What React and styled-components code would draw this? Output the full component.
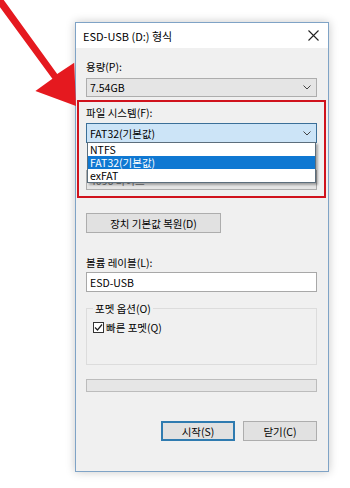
import styled, { createGlobalStyle } from "styled-components"

const GlobalStyle = createGlobalStyle`
  html, body {
    margin: 0;
    background: #ffffff;
  }
  body {
    font-family: "Noto Sans CJK KR", "Noto Sans", sans-serif;
    font-size: 10.5px;
    color: #000;
  }
`

function Chevron() {
  return (
    <svg width="8" height="5" viewBox="0 0 8 5">
      <path d="M0.5 0.5 L4 4 L7.5 0.5" fill="none" stroke="#444" strokeWidth="1" />
    </svg>
  )
}

function App() {
  return (
    <Page>
      <GlobalStyle />
      <Arrow width="90" height="110" viewBox="0 0 90 110">
        <polygon
          points="-0.3,-5.6 57.2,74 74.2,62.8 76,106 35.4,91 52.4,78.7 -6.4,-1.4"
          fill="#e5191f"
        />
      </Arrow>

      <Window>
        <TitleBar>
          <span>ESD-USB (D:) 형식</span>
          <svg width="11" height="11" viewBox="0 0 11 11">
            <path d="M0.5 0.5 L10.5 10.5 M10.5 0.5 L0.5 10.5" stroke="#222" strokeWidth="1.1" />
          </svg>
        </TitleBar>

        <Body>
          <Label $top={10.5}>용량(P):</Label>
          <Combo $top={4} $height={19}>
            <span>7.54GB</span>
            <Chevron />
          </Combo>

          <Highlight>
            <Label $top={0}>파일 시스템(F):</Label>
            <Combo $top={3} $height={20} $focused>
              <span>FAT32(기본값)</span>
              <Chevron />
              <List>
                <Option>NTFS</Option>
                <Option $selected>FAT32(기본값)</Option>
                <Option>exFAT</Option>
              </List>
            </Combo>
            {/* covered by the open list */}
            <Label $top={4} $hidden>할당 단위 크기(A):</Label>
            <Combo $top={8} $height={20}>
              <Muted>4096 바이트</Muted>
              <Chevron />
            </Combo>
          </Highlight>

          <Button $top={15} $width={135}>장치 기본값 복원(D)</Button>

          <Label $top={21.5}>볼륨 레이블(L):</Label>
          <TextBox>ESD-USB</TextBox>

          <Group>
            <GroupTitle>포멧 옵션(O)</GroupTitle>
            <CheckRow>
              <CheckBox>
                <svg width="9" height="9" viewBox="0 0 9 9">
                  <path d="M1 4.5 L3.5 7 L8 1.5" fill="none" stroke="#222" strokeWidth="1.2" />
                </svg>
              </CheckBox>
              <span>빠른 포멧(Q)</span>
            </CheckRow>
          </Group>

          <Progress />

          <ButtonRow>
            <Button $width={74} $default>시작(S)</Button>
            <Button $width={74}>닫기(C)</Button>
          </ButtonRow>
        </Body>
      </Window>
    </Page>
  )
}

const Page = styled.div`
  position: relative;
  width: 350px;
  height: 488px;
  box-sizing: border-box;
  padding: 22px 0 0 75px;
  overflow: hidden;
`

const Arrow = styled.svg`
  position: absolute;
  left: 0;
  top: 0;
  z-index: 2;
`

const Window = styled.div`
  width: 254px;
  box-sizing: border-box;
  border: 1px solid #7fa3c6;
  background: #f0f0f0;
  box-shadow: 0 0 9px rgba(0, 0, 0, 0.22);
  display: flex;
  flex-direction: column;
`

const TitleBar = styled.div`
  height: 25px;
  background: #ffffff;
  display: flex;
  align-items: center;
  justify-content: space-between;
  padding: 0 9px 0 7px;
  font-size: 11px;
`

const Body = styled.div`
  display: flex;
  flex-direction: column;
  padding: 0 11px 30px 10px;
`

const Label = styled.div`
  margin-top: ${(p) => p.$top}px;
  line-height: 15px;
  height: 15px;
  white-space: nowrap;
  visibility: ${(p) => (p.$hidden ? "hidden" : "visible")};
`

const Combo = styled.div`
  position: relative;
  margin-top: ${(p) => p.$top}px;
  height: ${(p) => p.$height}px;
  box-sizing: border-box;
  border: 1px solid ${(p) => (p.$focused ? "#3b6f98" : "#adadad")};
  background: ${(p) => (p.$focused ? "#cce4f7" : "#e5e5e5")};
  display: flex;
  align-items: center;
  justify-content: space-between;
  padding: 0 5px 0 3px;
`

const Muted = styled.span`
  color: #6d6d6d;
`

const List = styled.div`
  position: absolute;
  top: 100%;
  left: 0;
  right: 0;
  z-index: 1;
  background: #ffffff;
  border: 1px solid #5c6e7c;
  box-shadow: 2px 2px 2px rgba(0, 0, 0, 0.3);
  display: flex;
  flex-direction: column;
`

const Option = styled.div`
  height: 13px;
  line-height: 13px;
  padding: 0 2px;
  background: ${(p) => (p.$selected ? "#0f78d2" : "#ffffff")};
  color: ${(p) => (p.$selected ? "#ffffff" : "#000")};
`

const Highlight = styled.div`
  margin: 3.5px -9px 0 -9px;
  border: 2px solid #d0121c;
  padding: 3px 7px 6px 7px;
  display: flex;
  flex-direction: column;
`

const Button = styled.div`
  margin-top: ${(p) => p.$top || 0}px;
  align-self: flex-start;
  width: ${(p) => p.$width}px;
  height: 20px;
  box-sizing: border-box;
  border: ${(p) => (p.$default ? "2px solid #2f7bb0" : "1px solid #adadad")};
  background: #e1e1e1;
  display: flex;
  align-items: center;
  justify-content: center;
  white-space: nowrap;
`

const TextBox = styled.div`
  margin-top: 2.5px;
  height: 20px;
  box-sizing: border-box;
  border: 1px solid #a8a8a8;
  background: #ffffff;
  display: flex;
  align-items: center;
  padding: 0 3px;
`

const Group = styled.div`
  margin-top: 16px;
  border: 1px solid #dcdcdc;
  padding: 0 6px 30px 6px;
  display: flex;
  flex-direction: column;
`

const GroupTitle = styled.div`
  align-self: flex-start;
  margin-top: -8px;
  line-height: 15px;
  padding: 0 2px;
  background: #f0f0f0;
`

const CheckRow = styled.div`
  margin-top: 5px;
  display: flex;
  align-items: center;
  gap: 2px;
  height: 13px;
`

const CheckBox = styled.div`
  width: 11px;
  height: 11px;
  box-sizing: border-box;
  border: 1px solid #333;
  background: #ffffff;
  display: flex;
  align-items: center;
  justify-content: center;
`

const Progress = styled.div`
  margin-top: 14px;
  height: 13px;
  box-sizing: border-box;
  border: 1px solid #bcbcbc;
  background: #e6e6e6;
`

const ButtonRow = styled.div`
  margin-top: 29px;
  display: flex;
  justify-content: flex-end;
  gap: 8px;
`

export default App
